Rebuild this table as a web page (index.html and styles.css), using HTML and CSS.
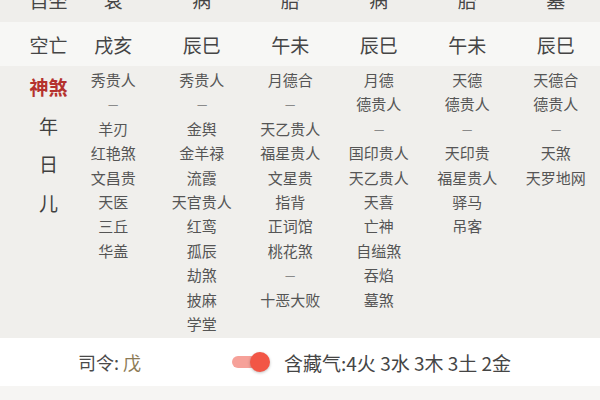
FILE: index.html
```html
<!DOCTYPE html>
<html lang="zh">
<head>
<meta charset="utf-8">
<link rel="stylesheet" href="styles.css">
</head>
<body>
<div class="sheet">
  <div class="row row-top">
    <div class="label">自坐</div>
    <div class="cell">衰</div>
    <div class="cell">病</div>
    <div class="cell">胎</div>
    <div class="cell">病</div>
    <div class="cell">胎</div>
    <div class="cell">墓</div>
  </div>
  <div class="row row-kong">
    <div class="label">空亡</div>
    <div class="cell">戌亥</div>
    <div class="cell">辰巳</div>
    <div class="cell">午未</div>
    <div class="cell">辰巳</div>
    <div class="cell">午未</div>
    <div class="cell">辰巳</div>
  </div>
  <div class="shensha">
    <div class="labels">
      <div class="sha-title">神煞</div>
      <div class="sha-sub">年</div>
      <div class="sha-sub">日</div>
      <div class="sha-sub">儿</div>
    </div>
    <ul class="list">
      <li>秀贵人</li><li class="dash">–</li><li>羊刃</li><li>红艳煞</li><li>文昌贵</li><li>天医</li><li>三丘</li><li>华盖</li>
    </ul>
    <ul class="list">
      <li>秀贵人</li><li class="dash">–</li><li>金舆</li><li>金羊禄</li><li>流霞</li><li>天官贵人</li><li>红鸾</li><li>孤辰</li><li>劫煞</li><li>披麻</li><li>学堂</li>
    </ul>
    <ul class="list">
      <li>月德合</li><li class="dash">–</li><li>天乙贵人</li><li>福星贵人</li><li>文星贵</li><li>指背</li><li>正词馆</li><li>桃花煞</li><li class="dash">–</li><li>十恶大败</li>
    </ul>
    <ul class="list">
      <li>月德</li><li>德贵人</li><li class="dash">–</li><li>国印贵人</li><li>天乙贵人</li><li>天喜</li><li>亡神</li><li>自缢煞</li><li>吞焰</li><li>墓煞</li>
    </ul>
    <ul class="list">
      <li>天德</li><li>德贵人</li><li class="dash">–</li><li>天印贵</li><li>福星贵人</li><li>驿马</li><li>吊客</li>
    </ul>
    <ul class="list">
      <li>天德合</li><li>德贵人</li><li class="dash">–</li><li>天煞</li><li>天罗地网</li>
    </ul>
  </div>
  <div class="footer">
    <div class="siling">司令: <span class="wu">戊</span></div>
    <div class="toggle"><span class="track"></span><span class="knob"></span></div>
    <div class="cangqi">含藏气:4火 3水 3木 3土 2金</div>
  </div>
  <div class="strip"></div>
</div>
</body>
</html>
```
FILE: styles.css
```css
html, body {
  margin: 0;
  padding: 0;
  background: #ffffff;
}
body {
  width: 600px;
  height: 400px;
  overflow: hidden;
  font-family: "Noto Sans CJK SC", "Noto Sans", sans-serif;
  color: #454545;
}
.sheet {
  margin-top: -24px;
}
.row {
  display: grid;
  grid-template-columns: 69px repeat(6, 1fr);
  align-items: center;
  font-size: 19px;
}
.row-top {
  height: 46px;
  background: #efeeeb;
}
.row-kong {
  height: 44px;
  background: #f7f7f5;
}
.label {
  padding-left: 28px;
  text-align: center;
  white-space: nowrap;
}
.cell {
  text-align: center;
}
.shensha {
  display: grid;
  grid-template-columns: 69px repeat(6, 1fr);
  background: #f0efec;
  padding: 2px 0 3px;
  height: 267px;
}
.labels {
  padding-left: 28px;
  text-align: center;
  font-size: 19px;
  line-height: 38.5px;
  color: #404040;
}
.sha-title {
  color: #b5322e;
  font-weight: 700;
  white-space: nowrap;
}
.list {
  list-style: none;
  margin: 0;
  padding: 0;
  text-align: center;
  font-size: 15px;
  line-height: 24.4px;
  color: #555555;
}
.dash {
  color: #8a8a8a;
  transform: scaleX(1.4);
}
.footer {
  height: 48px;
  background: #ffffff;
  display: flex;
  align-items: center;
  padding-left: 78px;
}
.siling {
  font-size: 18px;
  color: #4a4a4a;
  white-space: nowrap;
}
.wu {
  color: #8c7a55;
}
.toggle {
  position: relative;
  width: 38px;
  height: 20px;
  margin-left: 91px;
}
.track {
  position: absolute;
  left: 0;
  top: 4px;
  width: 34px;
  height: 12px;
  border-radius: 6px;
  background: #f6a199;
}
.knob {
  position: absolute;
  left: 18px;
  top: 0;
  width: 20px;
  height: 20px;
  border-radius: 50%;
  background: #f25646;
  box-shadow: 0 1px 3px rgba(0, 0, 0, 0.25);
}
.cangqi {
  margin-left: 14px;
  font-size: 19px;
  color: #454545;
  white-space: nowrap;
}
.strip {
  height: 40px;
  background: #f6f5f3;
}
```
